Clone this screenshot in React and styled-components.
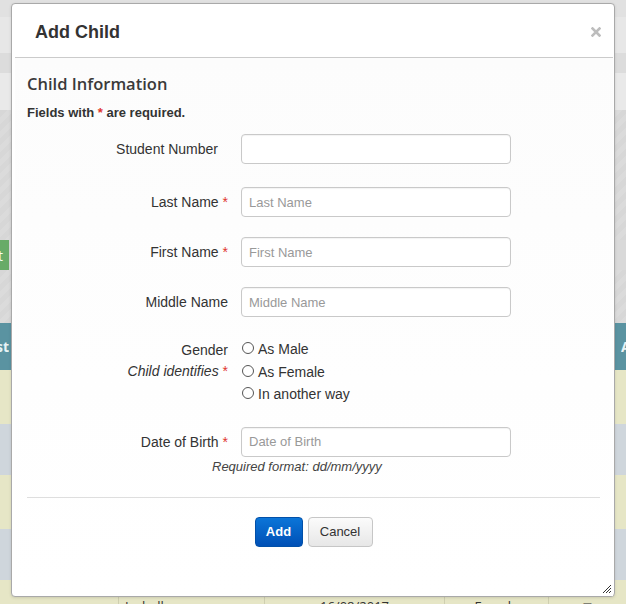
import React from 'react';
import styled, { createGlobalStyle } from 'styled-components';

const GlobalStyle = createGlobalStyle`
  html, body { margin: 0; padding: 0; }
  body {
    font-family: "Liberation Sans", Arial, sans-serif;
    background: #d9d9d9;
    overflow: hidden;
  }
  * { box-sizing: border-box; }
`;

const Page = styled.div`
  position: relative;
  width: 626px;
  height: 604px;
  overflow: hidden;
`;

/* ---------- page behind the modal ---------- */

const Backdrop = styled.div`
  display: flex;
  flex-direction: column;
  font-family: "Open Sans", sans-serif;
`;

const Band = styled.div`
  flex-shrink: 0;
  height: ${p => p.$h}px;
  background: ${p => p.$bg};
  display: flex;
  align-items: center;
  justify-content: space-between;
`;

const Hatched = styled(Band)`
  background: repeating-linear-gradient(135deg, #d7d7d7 0 5px, #dbdbdb 5px 10px);
`;

const ClipCell = styled.div`
  width: ${p => p.$w}px;
  height: 100%;
  overflow: hidden;
  display: flex;
  align-items: center;
  justify-content: ${p => (p.$end ? 'flex-end' : 'flex-start')};
  white-space: nowrap;
  flex-shrink: 0;
`;

const GreenButton = styled.div`
  height: 100%;
  padding: 0 6px;
  background: #68ab68;
  color: #f4fff4;
  font-size: 14px;
  display: flex;
  align-items: center;
  flex-shrink: 0;
`;

const HeadText = styled.span`
  color: #e8f3f6;
  font-weight: 700;
  font-size: 14px;
  flex-shrink: 0;
`;

const TableRow = styled.div`
  flex-shrink: 0;
  height: ${p => p.$h || 53}px;
  background: ${p => p.$bg};
  display: grid;
  grid-template-columns: 118px 146px 180px 104px 1fr;
  font-size: 13px;
  color: #333;
`;

const TableCell = styled.div`
  border-left: ${p => (p.$first ? 'none' : '1px solid #cfcfb0')};
  padding: 17px 6px 0;
  text-align: ${p => p.$align || 'left'};
`;

/* ---------- modal ---------- */

const Dialog = styled.div`
  position: absolute;
  left: 11px;
  top: 3px;
  width: 604px;
  height: 594px;
  border: 1px solid #a9a9a9;
  border-radius: 4px;
  background: #fff;
  padding: 0 1px 0 3px;
  display: flex;
  flex-direction: column;
  box-shadow: 0 1px 3px rgba(0, 0, 0, 0.12);
`;

const Header = styled.div`
  height: 54px;
  flex-shrink: 0;
  border-bottom: 1px solid #cbcbcb;
  display: flex;
  align-items: center;
  justify-content: space-between;
  padding: 3px 12px 0 20px;
`;

const Title = styled.h1`
  margin: 0;
  font-size: 18px;
  font-weight: 700;
  color: #333;
`;

const CloseButton = styled.button`
  border: 0;
  background: none;
  padding: 0;
  width: 10px;
  height: 10px;
  display: flex;
  cursor: pointer;
`;

const Body = styled.div`
  flex: 1;
  padding: 0 13px 0 12px;
  background: linear-gradient(#fcfcfc, #fefefe 60%, #fff);
  display: flex;
  flex-direction: column;
`;

const SectionTitle = styled.h2`
  margin: 15px 0 0;
  font-family: "Open Sans", sans-serif;
  font-size: 16.5px;
  line-height: 22px;
  font-weight: 600;
  color: #3a3a3a;
`;

const Note = styled.p`
  margin: 10px 0 0;
  font-size: 13px;
  line-height: 16px;
  font-weight: 700;
  color: #333;
`;

const Star = styled.span`
  color: #e0352f;
  font-weight: normal;
  font-style: normal;
`;

const NoteStar = styled(Star)`
  font-weight: 700;
`;

const Form = styled.form`
  margin-top: 13px;
  display: flex;
  flex-direction: column;
`;

const FieldRow = styled.div`
  display: grid;
  grid-template-columns: 201px 270px;
  column-gap: 13px;
  align-items: ${p => (p.$top ? 'start' : 'center')};
  margin-top: ${p => p.$gap || 0}px;
`;

const Label = styled.label`
  text-align: right;
  font-size: 14px;
  line-height: 30px;
  color: #333;
  padding-right: ${p => p.$pad || 0}px;
`;

const GroupLabel = styled.div`
  text-align: right;
  font-size: 14px;
  line-height: 21px;
  padding-top: 2px;
  color: #333;
  display: flex;
  flex-direction: column;
`;

const Hint = styled.span`
  font-style: italic;
`;

const TextInput = styled.input`
  width: 270px;
  height: 30px;
  border: 1px solid #c9c9c9;
  border-radius: 4px;
  padding: 0 7px;
  font-family: "Liberation Sans", Arial, sans-serif;
  font-size: 13px;
  color: #333;
  background: #fff;
  box-shadow: inset 0 1px 1px rgba(0, 0, 0, 0.05);
  outline: none;
  &::placeholder { color: #999; }
`;

const RadioList = styled.div`
  display: flex;
  flex-direction: column;
`;

const RadioOption = styled.label`
  display: flex;
  align-items: center;
  height: 22.5px;
  font-size: 14px;
  color: #333;
  padding-left: 1px;
`;

const RadioCircle = styled.span`
  width: 12px;
  height: 12px;
  border: 1px solid #555;
  border-radius: 50%;
  background: #fff;
  margin: -2px 4px 0 0;
  flex-shrink: 0;
`;

const HelpText = styled.div`
  margin-top: 2px;
  padding-left: 185px;
  font-size: 13px;
  line-height: 15px;
  font-style: italic;
  color: #444;
`;

const Divider = styled.hr`
  margin: 23px 0 0;
  border: 0;
  border-top: 1px solid #dedede;
`;

const Actions = styled.div`
  margin-top: 19px;
  display: flex;
  justify-content: center;
  gap: 5px;
`;

const Button = styled.button`
  height: 30px;
  width: ${p => p.$w}px;
  padding: 0;
  border-radius: 4px;
  font-family: "Liberation Sans", Arial, sans-serif;
  font-size: 13px;
  cursor: pointer;
  ${p =>
    p.$primary
      ? `
    color: #fff;
    font-weight: 700;
    background: linear-gradient(#0b75d8, #0050b6);
    border: 1px solid #0250a8;
  `
      : `
    color: #333;
    background: linear-gradient(#fbfbfb, #e7e7e7);
    border: 1px solid #c6c6c6;
  `}
`;

const Grip = styled.svg`
  position: absolute;
  right: 2px;
  bottom: 2px;
`;

const fields = [
  { label: 'Last Name', placeholder: 'Last Name', gap: 23 },
  { label: 'First Name', placeholder: 'First Name', gap: 20 },
];

export default function App() {
  return (
    <Page>
      <GlobalStyle />
      <Backdrop>
        <Band $h={17} $bg="#e1e1e1" />
        <Band $h={36} $bg="#e7e7e7" />
        <Band $h={20} $bg="#dcdcdc" />
        <Band $h={37} $bg="#e9e9e9" />
        <Hatched $h={130} />
        <Band $h={30} $bg="#d9d9d9">
          <ClipCell $w={9} $end>
            <GreenButton>Add Student</GreenButton>
          </ClipCell>
        </Band>
        <Hatched $h={53} />
        <Band $h={47} $bg="#5a93a1">
          <ClipCell $w={9} $end>
            <HeadText>First</HeadText>
          </ClipCell>
          <ClipCell $w={5}>
            <HeadText>Age</HeadText>
          </ClipCell>
        </Band>
        <TableRow $bg="#e6e6c6" $h={54} />
        <TableRow $bg="#cfd6dc" $h={51} />
        <TableRow $bg="#e6e6c6" $h={54} />
        <TableRow $bg="#cfd6dc" $h={51} />
        <TableRow $bg="#e6e6c6" $h={54}>
          <TableCell $first />
          <TableCell>Isabella</TableCell>
          <TableCell $align="center">16/08/2017</TableCell>
          <TableCell $align="center">Female</TableCell>
          <TableCell $align="center">&#9633;</TableCell>
        </TableRow>
      </Backdrop>

      <Dialog role="dialog" aria-label="Add Child">
        <Header>
          <Title>Add Child</Title>
          <CloseButton aria-label="Close">
            <svg width="10" height="10" viewBox="0 0 10 10">
              <path d="M1.5 1.5 L8.5 8.5 M8.5 1.5 L1.5 8.5" stroke="#bdbdbd" strokeWidth="2.6" strokeLinecap="square" />
            </svg>
          </CloseButton>
        </Header>
        <Body>
          <SectionTitle>Child Information</SectionTitle>
          <Note>
            Fields with <NoteStar>*</NoteStar> are required.
          </Note>
          <Form onSubmit={e => e.preventDefault()}>
            <FieldRow>
              <Label $pad={10}>Student Number</Label>
              <TextInput />
            </FieldRow>
            {fields.map(f => (
              <FieldRow key={f.label} $gap={f.gap}>
                <Label>
                  {f.label} <Star>*</Star>
                </Label>
                <TextInput placeholder={f.placeholder} />
              </FieldRow>
            ))}
            <FieldRow $gap={20}>
              <Label>Middle Name</Label>
              <TextInput placeholder="Middle Name" />
            </FieldRow>
            <FieldRow $gap={21} $top>
              <GroupLabel>
                <span>Gender</span>
                <span>
                  <Hint>Child identifies</Hint> <Star>*</Star>
                </span>
              </GroupLabel>
              <RadioList>
                {['As Male', 'As Female', 'In another way'].map(o => (
                  <RadioOption key={o}>
                    <RadioCircle />
                    {o}
                  </RadioOption>
                ))}
              </RadioList>
            </FieldRow>
            <FieldRow $gap={21}>
              <Label>
                Date of Birth <Star>*</Star>
              </Label>
              <TextInput placeholder="Date of Birth" />
            </FieldRow>
            <HelpText>Required format: dd/mm/yyyy</HelpText>
          </Form>
          <Divider />
          <Actions>
            <Button $primary $w={48}>Add</Button>
            <Button $w={65}>Cancel</Button>
          </Actions>
        </Body>
        <Grip width="11" height="11" viewBox="0 0 11 11">
          <path d="M10 2 L2 10 M10 5 L5 10 M10 8 L8 10" stroke="#333" strokeWidth="1" />
        </Grip>
      </Dialog>
    </Page>
  );
}
